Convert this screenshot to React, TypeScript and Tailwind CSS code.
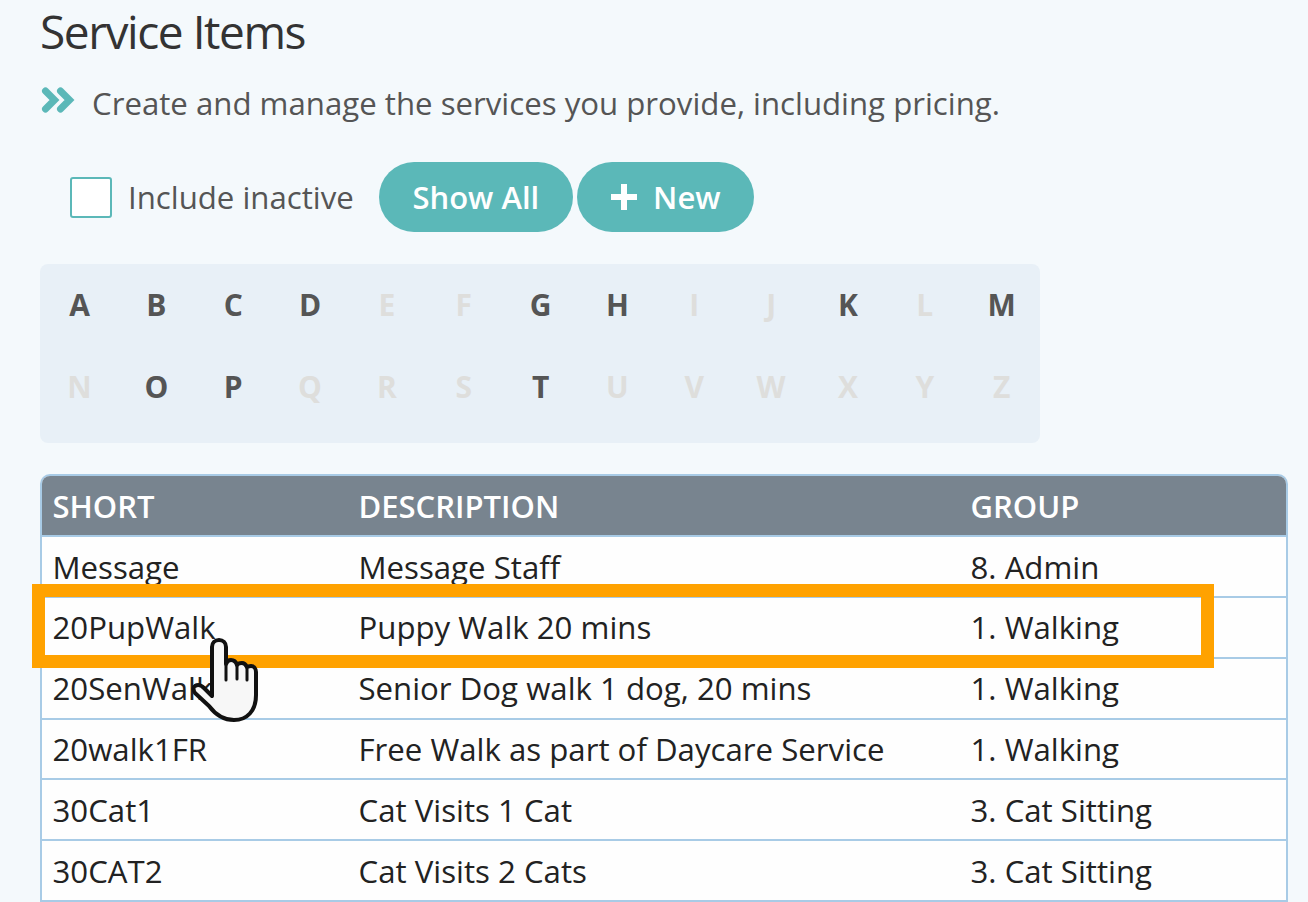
const letters = [
    ["A", 1], ["B", 1], ["C", 1], ["D", 1], ["E", 0], ["F", 0], ["G", 1], ["H", 1], ["I", 0], ["J", 0], ["K", 1], ["L", 0], ["M", 1],
    ["N", 0], ["O", 1], ["P", 1], ["Q", 0], ["R", 0], ["S", 0], ["T", 1], ["U", 0], ["V", 0], ["W", 0], ["X", 0], ["Y", 0], ["Z", 0],
] as const;

// row heights are not quite even in the picture, so each row carries its own
const rows = [
    { cells: ["Message", "Message Staff", "8. Admin"], size: "h-[61px] leading-[60px]" },
    { cells: ["20PupWalk", "Puppy Walk 20 mins", "1. Walking"], size: "h-[61px] leading-[58px]" },
    { cells: ["20SenWalk", "Senior Dog walk 1 dog, 20 mins", "1. Walking"], size: "h-[61px] leading-[58px]" },
    { cells: ["20walk1FR", "Free Walk as part of Daycare Service", "1. Walking"], size: "h-[60px] leading-[58px]" },
    { cells: ["30Cat1", "Cat Visits 1 Cat", "3. Cat Sitting"], size: "h-[61px] leading-[60px]" },
    { cells: ["30CAT2", "Cat Visits 2 Cats", "3. Cat Sitting"], size: "h-[61px] leading-[60px]" },
];

const HandCursor = () => (
    <svg className="absolute top-[638px] left-[190px]" width="72" height="86" viewBox="0 0 72 86">
        <path
            d="M22 9c0-4 3-7 7-7s7 3 7 7v17c1-3 3-4 5-4c3 0 5 2 6 5c1-2 3-2 5-2c3 0 4 2 5 4c1-1 2-1 4-1c3 0 5 3 5 6v23c0 16-9 25-22 25c-12 0-19-6-25-14L5 55c-2-3-2-6 0-7c3-2 6-1 9 2l8 8z"
            fill="#f7f7f7"
            stroke="#111"
            strokeWidth="4"
            strokeLinejoin="round"
        />
        <path d="M36 26v16M47 28v13M57 30v12" stroke="#111" strokeWidth="3" strokeLinecap="round" fill="none" />
    </svg>
);

export default function App() {
    return (
        <div className="relative h-[902px] w-[1308px] overflow-hidden bg-[#f4f9fc] font-['Open_Sans',sans-serif]">
            <div className="pl-[40px]">
                <h1 className="mt-[1px] text-[46px] leading-[60px] tracking-[-1.45px] text-[#333333]">Service Items</h1>

                <div className="mt-[13px] flex h-[60px] items-center">
                    <svg width="36" height="28" viewBox="0 0 36 28" className="mb-[6px] ml-[1px]">
                        <path
                            d="M4.5 4l9 9-9 9M19.5 4l9 9-9 9"
                            fill="none"
                            stroke="#5bb8b8"
                            strokeWidth="7"
                            strokeLinecap="round"
                        />
                    </svg>
                    <p className="mb-[2px] ml-[15px] text-[31.2px] text-[#555555]">
                        Create and manage the services you provide, including pricing.
                    </p>
                </div>

                <div className="mt-[28px] ml-[30px] flex h-[70px] items-center">
                    <div className="h-[41px] w-[42px] rounded-[3px] border-2 border-[#5bb8b8] bg-white" />
                    <span className="ml-[16px] text-[31.2px] text-[#555555]">Include inactive</span>
                    <button className="ml-[25px] h-[70px] w-[194px] rounded-[35px] bg-[#5bb8b8] text-[31px] font-semibold text-white">
                        Show All
                    </button>
                    <button className="ml-[4px] flex h-[70px] w-[177px] items-center justify-center gap-[15px] rounded-[35px] bg-[#5bb8b8] text-[31px] font-semibold text-white">
                        <svg width="28" height="28" viewBox="0 0 28 28">
                            <path d="M14 1v26M1 14h26" stroke="#fff" strokeWidth="6" />
                        </svg>
                        New
                    </button>
                </div>

                <div className="mt-[32px] grid h-[179px] w-[1000px] grid-cols-13 grid-rows-2 rounded-[8px] bg-[#e8f0f7] pb-[16px] pl-[1px]">
                    {letters.map(([l, on]) => (
                        <span
                            key={l}
                            className={`flex w-[77px] items-center justify-center text-[30px] font-bold ${on ? "text-[#555555]" : "text-[#dededc]"}`}
                        >
                            {l}
                        </span>
                    ))}
                </div>

                <div className="mt-[31px] w-[1248px] rounded-t-[10px] border-2 border-b-0 border-[#a8cbe6]">
                    <div className="grid h-[61px] grid-cols-[306px_612px_1fr] rounded-t-[8px] border-b-2 border-[#a8cbe6] bg-[#78848f] pl-[10.5px] text-[31px] leading-[60px] font-semibold text-white">
                        <span>SHORT</span>
                        <span>DESCRIPTION</span>
                        <span>GROUP</span>
                    </div>
                    {rows.map((r) => (
                        <div
                            key={r.cells[0]}
                            className={`grid grid-cols-[306px_612px_1fr] border-b-2 border-[#a8cbe6] bg-[#fefefe] pl-[10.5px] text-[31.2px] text-[#222222] ${r.size}`}
                        >
                            <span>{r.cells[0]}</span>
                            <span>{r.cells[1]}</span>
                            <span>{r.cells[2]}</span>
                        </div>
                    ))}
                </div>
            </div>

            {/* callout over the second row */}
            <div className="absolute top-[584px] left-[32px] h-[84px] w-[1182px] border-[13px] border-[#ffa200]" />
            <HandCursor />
        </div>
    );
}
